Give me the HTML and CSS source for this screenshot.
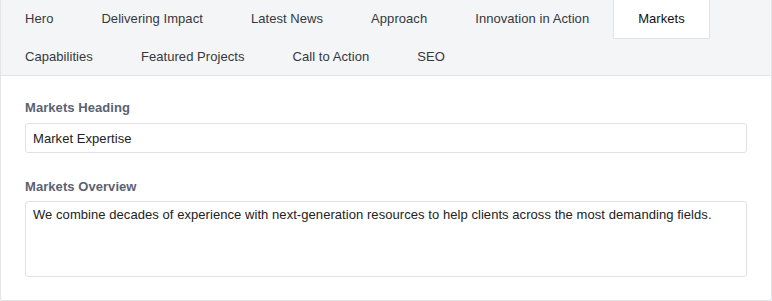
FILE: index.html
```html
<!DOCTYPE html>
<html>
<head>
<meta charset="utf-8">
<link rel="stylesheet" href="styles.css">
</head>
<body>
<div class="panel">
  <div class="tabs">
    <div class="tab">Hero</div>
    <div class="tab">Delivering Impact</div>
    <div class="tab">Latest News</div>
    <div class="tab">Approach</div>
    <div class="tab">Innovation in Action</div>
    <div class="tab active">Markets</div>
    <div class="tab">Capabilities</div>
    <div class="tab">Featured Projects</div>
    <div class="tab">Call to Action</div>
    <div class="tab">SEO</div>
  </div>
  <div class="content">
    <div class="field">
      <label class="label">Markets Heading</label>
      <input class="input" type="text" value="Market Expertise">
    </div>
    <div class="field">
      <label class="label">Markets Overview</label>
      <textarea class="textarea">We combine decades of experience with next-generation resources to help clients across the most demanding fields.</textarea>
    </div>
  </div>
</div>
</body>
</html>
```
FILE: styles.css
```css
html, body {
  margin: 0;
  padding: 0;
  background: #ffffff;
}
body {
  font-family: "Liberation Sans", Arial, sans-serif;
  font-size: 13px;
  letter-spacing: 0.06px;
  color: #333;
}
.panel {
  width: 772px;
  height: 301px;
  box-sizing: border-box;
  border: 1px solid #e3e4e6;
  border-top: none;
  border-radius: 0 0 3px 3px;
  overflow: hidden;
}
.tabs {
  display: flex;
  flex-wrap: wrap;
  background: #f4f5f7;
  border-bottom: 1px solid #e3e4e6;
}
.tab {
  height: 37.5px;
  line-height: 37px;
  padding: 0 24px;
  box-sizing: border-box;
  color: #35383d;
  white-space: nowrap;
}
.tab.active {
  height: 38.5px;
  background: #ffffff;
  color: #111;
  border: 1px solid #e1e3e6;
  border-top: none;
  padding: 0 24px;
  margin-bottom: -1px;
}
.content {
  padding: 24px;
}
.field {
  display: flex;
  flex-direction: column;
}
.field + .field {
  margin-top: 26px;
}
.label {
  font-weight: bold;
  color: #5a6271;
  line-height: 16px;
  margin-bottom: 7px;
}
.input, .textarea {
  font-family: "Liberation Sans", Arial, sans-serif;
  font-size: 13px;
  letter-spacing: 0.06px;
  color: #222;
  border: 1px solid #e2e2e2;
  border-radius: 3px;
  box-sizing: border-box;
  padding: 0 7px;
  margin: 0;
  outline: none;
  background: #fff;
}
.input {
  height: 30px;
}
.textarea {
  height: 76px;
  padding-top: 5px;
  resize: none;
  line-height: 16px;
  margin-top: -1px;
}
```
